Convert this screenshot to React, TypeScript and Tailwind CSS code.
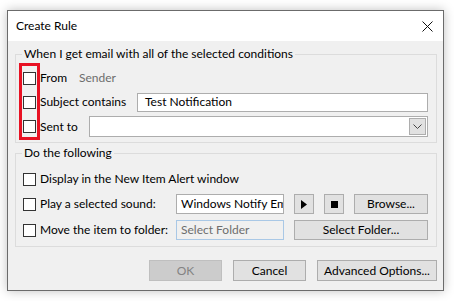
import React from "react";

function Check() {
  return <span className="w-[13px] h-[13px] shrink-0 border border-[#333333] bg-white" />;
}

function Btn({ children, className = "" }: { children: React.ReactNode; className?: string }) {
  return (
    <div
      className={
        "h-[20px] flex items-center justify-center border border-[#adadad] bg-[#e1e1e1] text-[#000] " +
        className
      }
    >
      {children}
    </div>
  );
}

export default function App() {
  return (
    <div
      className="w-[454px] h-[301px] bg-white pt-[10px] pl-[7px] text-[12px] leading-none text-black"
      style={{ fontFamily: '"Segoe UI", Lato, "Noto Sans", sans-serif' }}
    >
      <div className="w-[437px] h-[281px] border border-[#6b6b6b] bg-[#f0f0f0] flex flex-col shadow-[0_0_10px_rgba(0,0,0,0.25)]">
        {/* title bar */}
        <div className="h-[30px] bg-white flex items-center justify-between pl-[8px] pr-[10px]">
          <span className="text-[12px]">Create Rule</span>
          <svg width="11" height="11" viewBox="0 0 11 11">
            <path d="M0.5 0.5 L10.5 10.5 M10.5 0.5 L0.5 10.5" stroke="#111" strokeWidth="1" />
          </svg>
        </div>

        <div className="pl-[7px] pt-[13px]">
          {/* conditions group */}
          <div className="relative w-[422px] border border-[#dcdcdc] pt-[13px] pb-[5px] pl-[7px] pr-[8px] flex flex-col gap-[4px]">
            <span className="absolute left-[6px] -top-[8px] px-[2px] bg-[#f0f0f0] leading-[14px]">
              When I get email with all of the selected conditions
            </span>
            <div className="absolute left-[3px] top-[8px] w-[21px] h-[77px] border-[3px] border-[#e81123]" />
            <div className="h-[20px] flex items-center">
              <Check />
              <span className="ml-[4px] w-[39px]">From</span>
              <span className="text-[#6d6d6d]">Sender</span>
            </div>
            <div className="h-[20px] flex items-center">
              <Check />
              <span className="ml-[4px] w-[97px]">Subject contains</span>
              <div className="flex-1 h-[19px] border border-[#adadad] bg-white flex items-center pl-[7px]">
                Test Notification
              </div>
            </div>
            <div className="h-[21px] flex items-center">
              <Check />
              <span className="ml-[4px] w-[49px]">Sent to</span>
              <div className="flex-1 h-[21px] border border-[#adadad] bg-white flex items-center justify-end pr-[1px]">
                <div className="w-[17px] h-[17px] border border-[#adadad] bg-[#e1e1e1] flex items-center justify-center">
                  <svg width="9" height="5" viewBox="0 0 9 5">
                    <path d="M0.5 0.5 L4.5 4.5 L8.5 0.5" stroke="#444" strokeWidth="1" fill="none" />
                  </svg>
                </div>
              </div>
            </div>
          </div>

          {/* actions group */}
          <div className="relative mt-[10px] w-[422px] border border-[#dcdcdc] pt-[15px] pb-[6px] pl-[7px] pr-[8px] flex flex-col">
            <span className="absolute left-[6px] -top-[8px] px-[2px] bg-[#f0f0f0] leading-[14px]">
              Do the following
            </span>
            <div className="h-[20px] flex items-center">
              <Check />
              <span className="ml-[4px]">Display in the New Item Alert window</span>
            </div>
            <div className="mt-[5px] h-[20px] flex items-center">
              <Check />
              <span className="ml-[4px] w-[136px]">Play a selected sound:</span>
              <div className="w-[108px] h-[20px] border border-[#adadad] bg-white flex items-center pl-[4px] overflow-hidden whitespace-nowrap">
                Windows Notify Em
              </div>
              <Btn className="ml-[10px] w-[20px]">
                <svg width="6" height="9" viewBox="0 0 6 9">
                  <path d="M0 0 L6 4.5 L0 9 Z" fill="#000" />
                </svg>
              </Btn>
              <Btn className="ml-[10px] w-[20px]">
                <span className="w-[7px] h-[7px] bg-black" />
              </Btn>
              <Btn className="ml-[10px] w-[74px]">Browse...</Btn>
            </div>
            <div className="mt-[6px] h-[20px] flex items-center">
              <Check />
              <span className="ml-[4px] w-[136px]">Move the item to folder:</span>
              <div className="w-[108px] h-[20px] border border-[#a9c8e6] bg-[#f0f0f0] flex items-center pl-[4px] text-[#6d6d6d]">
                Select Folder
              </div>
              <Btn className="ml-[10px] w-[134px]">Select Folder...</Btn>
            </div>
          </div>
        </div>

        {/* footer */}
        <div className="mt-[13px] flex justify-end gap-[11px] pr-[6px]">
          <div className="w-[73px] h-[21px] flex items-center justify-center border border-[#bfbfbf] bg-[#cccccc] text-[#838383]">
            OK
          </div>
          <Btn className="w-[73px] h-[21px]">Cancel</Btn>
          <Btn className="w-[120px] h-[21px]">Advanced Options...</Btn>
        </div>
      </div>
    </div>
  );
}
